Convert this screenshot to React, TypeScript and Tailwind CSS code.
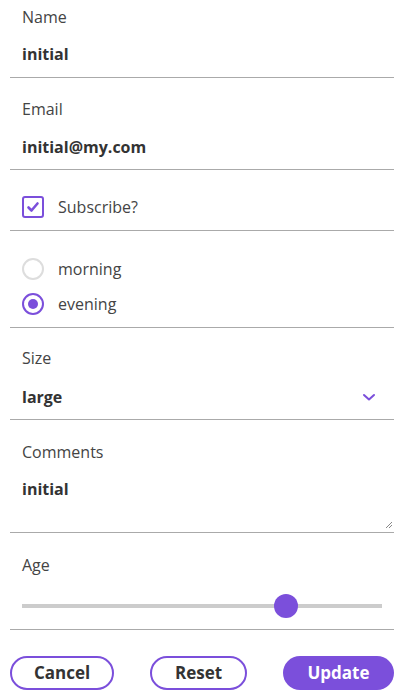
import React, { useState } from 'react';

const Row = ({ children, className = '' }: { children: React.ReactNode; className?: string }) => (
  <div className={`border-b border-[#aaaaaa] ${className}`}>{children}</div>
);

export default function App() {
  const [subscribe, setSubscribe] = useState(true);
  const [time, setTime] = useState('evening');
  const [age, setAge] = useState(73.3);

  return (
    <div className="w-[404px] h-[700px] bg-white px-[10px] text-[16px] text-[#333333] font-['Open_Sans',sans-serif]">
      {/* Name */}
      <Row className="h-[78px] px-3 pt-[4px]">
        <div className="h-[26px] leading-[26px] text-[#444]">Name</div>
        <div className="mt-[12px] h-[24px] leading-[24px] font-bold">initial</div>
      </Row>

      {/* Email */}
      <Row className="h-[92px] px-3 pt-[18px]">
        <div className="h-[26px] leading-[26px] text-[#444]">Email</div>
        <div className="mt-[13px] h-[24px] leading-[24px] font-bold">initial@my.com</div>
      </Row>

      {/* Subscribe */}
      <Row className="h-[61px] px-3 pt-[26px] flex items-start">
        <button
          onClick={() => setSubscribe(!subscribe)}
          className="w-[22px] h-[22px] border-2 border-[#7b4fdb] rounded-[3px] flex items-center justify-center"
        >
          {subscribe && (
            <svg width="14" height="14" viewBox="0 0 14 14" fill="none">
              <path d="M2.5 7.5 L5.5 10.5 L11.5 3.5" stroke="#7b4fdb" strokeWidth="2.6" strokeLinecap="round" strokeLinejoin="round" />
            </svg>
          )}
        </button>
        <span className="ml-[14px] h-[22px] leading-[22px] text-[#444]">Subscribe?</span>
      </Row>

      {/* Radios */}
      <Row className="h-[97px] px-3 pt-[26px]">
        {['morning', 'evening'].map((t, i) => (
          <div key={t} className={`flex items-center h-[24px] ${i ? 'mt-[11px]' : ''}`} onClick={() => setTime(t)}>
            <span
              className={`w-[22px] h-[22px] rounded-full border-2 flex items-center justify-center ${
                time === t ? 'border-[#7b4fdb]' : 'border-[#dddddd]'
              }`}
            >
              {time === t && <span className="w-[10px] h-[10px] rounded-full bg-[#7b4fdb]" />}
            </span>
            <span className="ml-[14px] text-[#444]">{t}</span>
          </div>
        ))}
      </Row>

      {/* Size */}
      <Row className="h-[92px] px-3 pt-[17px]">
        <div className="h-[26px] leading-[26px] text-[#444]">Size</div>
        <div className="mt-[14px] h-[24px] flex items-center justify-between">
          <span className="font-bold">large</span>
          <svg width="14" height="10" viewBox="0 0 14 10" className="mr-[6px]" fill="none">
            <path d="M2 3 L7 7.5 L12 3" stroke="#7b4fdb" strokeWidth="2" strokeLinecap="round" strokeLinejoin="round" />
          </svg>
        </div>
      </Row>

      {/* Comments */}
      <Row className="h-[113px] px-3 pt-[19px] relative">
        <div className="h-[26px] leading-[26px] text-[#444]">Comments</div>
        <div className="mt-[12px] h-[24px] leading-[24px] font-bold">initial</div>
        <svg width="8" height="8" viewBox="0 0 8 8" className="absolute right-[1px] bottom-[3px]">
          <path d="M1 7 L7 1 M4 7 L7 4" stroke="#888" strokeWidth="1" />
        </svg>
      </Row>

      {/* Age */}
      <Row className="h-[97px] px-3 pt-[19px]">
        <div className="h-[26px] leading-[26px] text-[#444]">Age</div>
        <div className="mt-[16px] relative h-[24px] flex items-center">
          <div className="w-full h-[4px] bg-[#cccccc]" />
          <input
            type="range"
            min={0}
            max={100}
            step="any"
            value={age}
            onChange={(e) => setAge(Number(e.target.value))}
            className="absolute inset-0 opacity-0 w-full"
          />
          <span
            className="absolute w-[24px] h-[24px] rounded-full bg-[#7b4fdb] -translate-x-1/2 pointer-events-none"
            style={{ left: `${age}%` }}
          />
        </div>
      </Row>

      {/* Buttons */}
      <div className="flex justify-between items-center pt-[26px]">
        <button className="w-[104px] h-[34px] rounded-full border-2 border-[#7b4fdb] font-bold text-[17px] text-[#333]">
          Cancel
        </button>
        <button className="w-[97px] h-[34px] rounded-full border-2 border-[#7b4fdb] font-bold text-[17px] text-[#333]">
          Reset
        </button>
        <button className="w-[111px] h-[34px] rounded-full bg-[#7b4fdb] font-bold text-[17px] text-white">
          Update
        </button>
      </div>
    </div>
  );
}
